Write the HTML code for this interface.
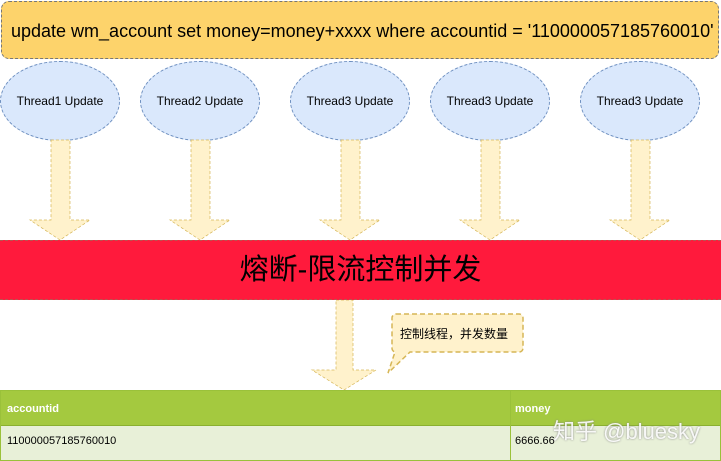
<!DOCTYPE html>
<html><head><meta charset="utf-8"><style>
body{margin:0;width:721px;height:461px;overflow:hidden;background:#fff;font-family:"Liberation Sans","Noto Sans CJK SC",sans-serif;position:relative}
.a{position:absolute}
.ell{position:absolute;width:118px;height:78px;border-radius:50%;background:#dae8fc;border:1px dashed #6c8ebf;font-size:12px;display:flex;align-items:center;justify-content:center;top:61px}
</style></head><body>
<div class="a" style="left:1px;top:1px;width:716px;height:58px;background:#fdd36b;border:1px dashed #777;border-radius:8px;font-size:18px;line-height:58px;padding-left:9px;box-sizing:border-box;width:718px">update wm_account set money=money+xxxx where accountid = '110000057185760010'</div>
<div class="ell" style="left:0px">Thread1 Update</div>
<div class="ell" style="left:140px">Thread2 Update</div>
<div class="ell" style="left:290px">Thread3 Update</div>
<div class="ell" style="left:430px">Thread3 Update</div>
<div class="ell" style="left:580px">Thread3 Update</div>
<svg class="a" style="left:0;top:0" width="721" height="461">
<g fill="#fff2cc" stroke="#d6b656" stroke-dasharray="3 2" stroke-width="0.7">
<path d="M51 140H70V220H90L60 240L30 220H51Z"/>
<path d="M191 140H210V220H230L200 240L170 220H191Z"/>
<path d="M341 140H360V220H380L350 240L320 220H341Z"/>
<path d="M481 140H500V220H520L490 240L460 220H481Z"/>
<path d="M631 140H650V220H670L640 240L610 220H631Z"/>
<path d="M336 300H353V370H376L344 390L312 370H336Z"/>
<path d="M396 314H519a4 4 0 0 1 4 4V348a4 4 0 0 1-4 4H410L388 373L395 352a4 4 0 0 1-3-4V318a4 4 0 0 1 4-4Z" stroke-width="1.5" stroke-dasharray="5 3"/>
</g>
</svg>
<div class="a" style="left:0;top:240px;width:721px;height:60px;background:#ff1a3c;border-top:1px dashed #b85450;border-bottom:1px dashed #b85450;box-sizing:border-box;font-size:29px;text-align:center;line-height:58px">熔断-限流控制并发</div>
<div class="a" style="left:400px;top:325px;font-size:12px">控制线程，并发数量</div>
<div class="a" style="left:0;top:390px;width:721px;height:71px;border:1px solid #9ac13a;box-sizing:border-box">
<div class="a" style="left:0;top:0;width:719px;height:34px;background:#a4c93f;border-bottom:1px solid #8ab030"></div>
<div class="a" style="left:0;top:35px;width:719px;height:34px;background:#e8f0d8"></div>
<div class="a" style="left:509px;top:0;width:1px;height:69px;background:#9ac13a"></div>
<div class="a" style="left:6px;top:12px;color:#fff;font-weight:bold;font-size:11px">accountid</div>
<div class="a" style="left:514px;top:12px;color:#fff;font-weight:bold;font-size:11px">money</div>
<div class="a" style="left:6px;top:44px;font-size:11px">110000057185760010</div>
<div class="a" style="left:514px;top:44px;font-size:11px">6666.66</div>
<div class="a" style="left:552px;top:23px;font-size:22px;color:rgba(255,255,255,0.9);text-shadow:0 0 2px #888">知乎 @bluesky</div>
</div>
</body></html>
